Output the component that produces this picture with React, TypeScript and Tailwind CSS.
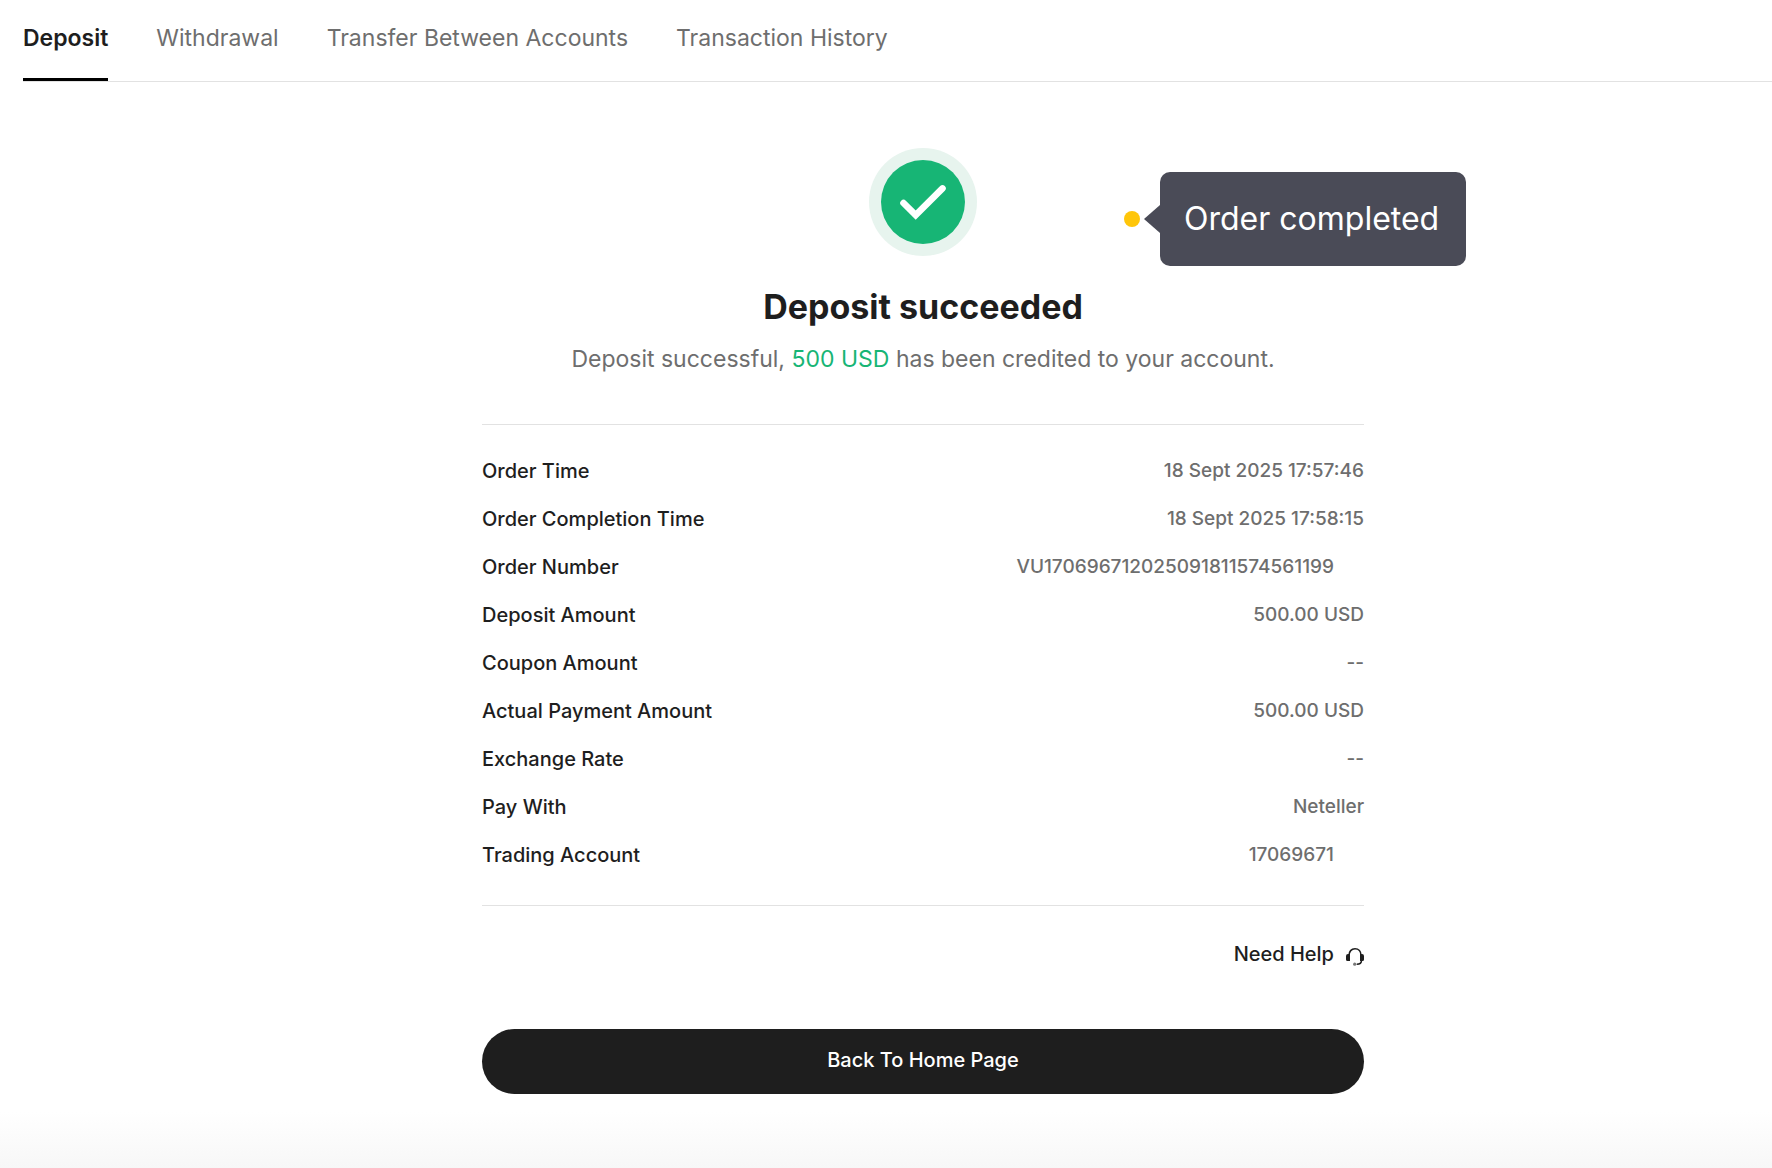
import clsx from "clsx";

interface Detail {
  label: string;
  value: string;
  copyable?: boolean;
}

const tabs = [
  "Deposit",
  "Withdrawal",
  "Transfer Between Accounts",
  "Transaction History",
];

const details: Detail[] = [
  { label: "Order Time", value: "18 Sept 2025 17:57:46" },
  { label: "Order Completion Time", value: "18 Sept 2025 17:58:15" },
  {
    label: "Order Number",
    value: "VU170696712025091811574561199",
    copyable: true,
  },
  { label: "Deposit Amount", value: "500.00 USD" },
  { label: "Coupon Amount", value: "--" },
  { label: "Actual Payment Amount", value: "500.00 USD" },
  { label: "Exchange Rate", value: "--" },
  { label: "Pay With", value: "Neteller" },
  { label: "Trading Account", value: "17069671", copyable: true },
];

function SuccessIcon() {
  return (
    <svg width="108" height="108" viewBox="0 0 108 108" fill="none" aria-hidden="true">
      <circle cx="54" cy="54" r="54" fill="#e7f4ee" />
      <circle cx="54" cy="54" r="42" fill="#17b575" />
      <path d="M34.5 55 46.7 67.2 73.5 40.4" stroke="#fff" strokeWidth="6.6" strokeLinecap="round" />
    </svg>
  );
}

function HeadsetIcon() {
  return (
    <svg width="18" height="20" viewBox="0 0 18 20" fill="none" aria-hidden="true">
      <path d="M3 9.5C3 5.4 5.400 2.800 9 2.800s6 2.600 6 6.700" stroke="#1e1e1e" strokeWidth="1.600" />
      <path d="M4 8v7H1.500A1.500 1.500 0 0 1 0 13.500V10a2 2 0 0 1 2-2h2ZM14 8v7h2.500a1.500 1.500 0 0 0 1.500-1.500V10a2 2 0 0 0-2-2h-2Z" fill="#1e1e1e" />
      <path d="M15.500 14.500c0 2.500-1.500 3.800-4.800 3.800" stroke="#1e1e1e" strokeWidth="1.500" />
      <circle cx="8.700" cy="18.200" r="1.600" fill="#777" />
    </svg>
  );
}

/* ================= TABS ================= */
function TabBar() {
  return (
    <nav className="ml-[23px] flex h-[82px] gap-12 border-b border-[#e2e2e2]">
      {tabs.map((tab, i) => (
        <a
          key={tab}
          href="#"
          className={clsx(
            "border-b-[3px] pt-[22px] text-[23px] leading-8 whitespace-nowrap",
            i === 0
              ? "border-black font-semibold text-[#1e1e1e]"
              : "border-transparent text-[#6e6e6e]"
          )}
        >
          {tab}
        </a>
      ))}
    </nav>
  );
}

/* ================= TOOLTIP ================= */
function StatusTooltip() {
  return (
    <div className="absolute top-6 left-[642px] flex items-center">
      <span className="size-4 rounded-full bg-[#ffc60a]" />
      <svg className="ml-1" width="16" height="28" viewBox="0 0 16 28" aria-hidden="true">
        <path d="M16 0v28L0 14Z" fill="#4a4b57" />
      </svg>
      <span
        role="tooltip"
        className="rounded-[10px] bg-[#4a4b57] py-[23px] pr-[27px] pl-6 text-[32px] leading-[48px] whitespace-nowrap text-white"
      >
        Order completed
      </span>
    </div>
  );
}

export default function App() {
  return (
    <div className="flex min-h-screen flex-col bg-white font-['Inter',sans-serif] text-[#1e1e1e]">
      <TabBar />

      <main className="flex justify-center pt-[66px] pl-[74px]">
        <div className="relative w-full max-w-[882px]">
          <StatusTooltip />

          <div className="flex flex-col items-center border-b border-[#e2e2e2] pb-[49px]">
            <SuccessIcon />
            <h1 className="mt-[27px] text-[34px] leading-12 font-bold">
              Deposit succeeded
            </h1>
            <p className="mt-3 text-[23px] leading-8 whitespace-nowrap text-[#6e6e6e]">
              Deposit successful, <span className="text-[#17b575]">500 USD</span>{" "}
              has been credited to your account.
            </p>
          </div>

          <dl className="flex flex-col gap-6 border-b border-[#e2e2e2] pt-[34px] pb-[38px] font-medium">
            {details.map((item) => (
              <div key={item.label} className="flex justify-between">
                <dt className="text-xl leading-6">{item.label}</dt>
                <dd
                  className={clsx(
                    "text-[19px] leading-6 text-[#6e6e6e]",
                    item.copyable && "pr-[30px]"
                  )}
                >
                  {item.value}
                </dd>
              </div>
            ))}
          </dl>

          <div className="mt-9 flex justify-end">
            <a href="#" className="flex items-end gap-3 text-xl leading-6 font-medium">
              Need Help
              <HeadsetIcon />
            </a>
          </div>

          <button
            type="button"
            className="mt-[63px] h-[65px] w-full rounded-full bg-[#1e1e1e] pb-1 text-xl font-medium text-white"
          >
            Back To Home Page
          </button>
        </div>
      </main>

      <div className="mt-auto h-14 bg-linear-to-b from-white to-[#f7f7f7]" />
    </div>
  );
}
